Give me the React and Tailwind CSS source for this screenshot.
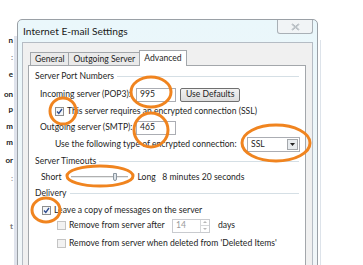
import React from "react";

function Check({ checked, disabled }) {
  return (
    <div
      className={
        "w-[9px] h-[9px] border flex items-center justify-center shrink-0 " +
        (disabled ? "border-[#c4c4c4] bg-[#f2f2f2]" : "border-[#8e8f8f] bg-[#f4f6f8]")
      }
    >
      {checked && (
        <svg width="7" height="7" viewBox="0 0 7 7">
          <path d="M1 3.5 L2.8 5.5 L6 1" stroke="#2b4a8e" strokeWidth="1.3" fill="none" />
        </svg>
      )}
    </div>
  );
}

function GroupLabel({ children }) {
  return (
    <div className="flex items-center h-[12px] gap-[3px]">
      <span className="text-[#1f1f1f] whitespace-nowrap">{children}</span>
      <div className="flex-1 h-px bg-[#d5dfe5] mt-[1px]" />
    </div>
  );
}

export default function App() {
  return (
    <div
      className="relative w-[363px] h-[265px] bg-white overflow-hidden text-[8.6px] leading-none text-[#1e1e1e] whitespace-nowrap"
      style={{ fontFamily: 'Lato, "Noto Sans", sans-serif' }}
    >
      {/* background window edge on the left */}
      <div className="absolute left-0 top-[36px] w-[17px] h-[229px] flex">
        <div className="flex flex-col w-[13px] font-bold text-[8px] leading-none text-[#222]">
          <span className="h-[8px] text-right">n</span>
          <span className="mt-[9px] text-right text-[#888]">:</span>
          <span className="mt-[9px] text-right">e</span>
          <span className="mt-[12px] text-right">on</span>
          <span className="mt-[7px] text-right">p</span>
          <span className="mt-[9px] text-right">m</span>
          <span className="mt-[8px] text-right">m</span>
          <span className="mt-[10px] text-right">or</span>
          <span className="mt-[10px] text-right text-[#999]">:</span>
          <span className="mt-[40px] text-right text-[#777]">t</span>
        </div>
        <div className="w-[3px] ml-[1px] h-full bg-[#dfe3ec]" />
      </div>

      {/* dialog window */}
      <div className="absolute left-[17px] top-[19px] w-[301px] h-[260px] rounded-t-[5px] border border-[#9aa0a6] bg-gradient-to-b from-[#eaf7fb] to-[#f1f6f8] flex flex-col px-[4px]">
        {/* title bar */}
        <div className="h-[22px] flex items-start shrink-0">
          <span className="text-[10.2px] text-[#1a1a1a] mt-[6px] ml-[1px]">Internet E-mail Settings</span>
          <div className="ml-auto w-[36px] h-[14px] border border-[#a9b0b6] border-t-0 rounded-b-[3px] bg-[#f1f4f6] flex items-center justify-center">
            <svg width="9" height="8" viewBox="0 0 9 8">
              <path d="M1 1 L8 7 M8 1 L1 7" stroke="#9aa3aa" strokeWidth="1.6" />
              <path d="M1 1 L8 7 M8 1 L1 7" stroke="#eef1f3" strokeWidth="0.5" />
            </svg>
          </div>
        </div>
        {/* client area */}
        <div className="flex-1 bg-[#f0f0f0] border border-[#b5bcc4] pt-[5px] pl-[5px] pr-[6px]">
          {/* tabs */}
          <div className="flex items-end h-[17px] pl-[2px]">
            <div className="h-[13px] px-[4px] border border-b-0 border-[#a3a7ab] bg-[#eaeaea] flex items-center">General</div>
            <div className="h-[13px] px-[4px] border border-b-0 border-l-0 border-[#a3a7ab] bg-[#eaeaea] flex items-center">Outgoing Server</div>
            <div className="h-[16px] px-[4px] border border-b-0 border-[#a3a7ab] bg-white flex items-center -ml-[1px] relative top-[1px]">Advanced</div>
          </div>
          {/* tab panel */}
          <div className="bg-white border border-[#a3a7ab] h-[220px] px-[6px] pt-[4px]">
            <GroupLabel>Server Port Numbers</GroupLabel>
            <div className="flex items-center h-[15px] mt-[5px] pl-[5px]">
              <span className="w-[96px]">Incoming server (POP3):</span>
              <div className="w-[40px] h-[14px] border border-[#abadb3] px-[3px] flex items-center">995</div>
              <div className="ml-[4px] h-[14px] px-[5px] border border-[#707070] rounded-[2px] bg-gradient-to-b from-[#f2f2f2] to-[#dddddd] flex items-center">Use Defaults</div>
            </div>
            <div className="flex items-center h-[12px] mt-[3px] pl-[20px] gap-[3px]">
              <Check checked />
              <span>This server requires an encrypted connection (SSL)</span>
            </div>
            <div className="flex items-center h-[15px] mt-[3px] pl-[5px]">
              <span className="w-[96px]">Outgoing server (SMTP):</span>
              <div className="w-[40px] h-[14px] border border-[#abadb3] px-[3px] flex items-center">465</div>
            </div>
            <div className="flex items-center h-[16px] mt-[1px] pl-[20px]">
              <span className="w-[192px] shrink-0">Use the following type of encrypted connection:</span>
              <div className="w-[53px] shrink-0 h-[15px] border border-[#abadb3] flex items-center pl-[3px]">
                <span className="flex-1">SSL</span>
                <div className="w-[11px] h-[11px] mr-[1px] border border-[#a4a8ac] bg-[#e8ecef] flex items-center justify-center">
                  <svg width="5" height="3" viewBox="0 0 5 3"><path d="M0 0 L5 0 L2.5 3 Z" fill="#222" /></svg>
                </div>
              </div>
            </div>
            <div className="mt-[3px]">
              <GroupLabel>Server Timeouts</GroupLabel>
            </div>
            <div className="flex items-center h-[12px] mt-[4px] pl-[6px]">
              <span>Short</span>
              <div className="relative ml-[10px] w-[57px] h-[10px] flex items-center">
                <div className="w-full h-[2px] bg-[#e7eaea] border-t border-[#b0b0b0]" />
                <div className="absolute left-[42px] top-[1px] w-[4px] h-[8px] bg-[#dfe5ea] border border-[#8b96a0] rounded-b-[2px]" />
              </div>
              <span className="ml-[9px]">Long&nbsp;&nbsp;&nbsp;8 minutes 20 seconds</span>
            </div>
            <div className="mt-[4px]">
              <GroupLabel>Delivery</GroupLabel>
            </div>
            <div className="flex items-center h-[12px] mt-[5px] pl-[7px] gap-[3px]">
              <Check checked />
              <span>Leave a copy of messages on the server</span>
            </div>
            <div className="flex items-center h-[15px] mt-[2px] pl-[22px] gap-[3px]">
              <Check disabled />
              <span className="w-[100px]">Remove from server after</span>
              <div className="w-[38px] h-[14px] border border-[#c9cbcf] flex items-center pl-[3px] text-[#9a9a9a]">
                <span className="flex-1">14</span>
                <div className="w-[9px] h-full flex flex-col border-l border-[#d6d8da]">
                  <div className="flex-1 flex items-center justify-center border-b border-[#d6d8da]">
                    <svg width="4" height="2" viewBox="0 0 4 2"><path d="M0 2 L4 2 L2 0 Z" fill="#b8b8b8" /></svg>
                  </div>
                  <div className="flex-1 flex items-center justify-center">
                    <svg width="4" height="2" viewBox="0 0 4 2"><path d="M0 0 L4 0 L2 2 Z" fill="#b8b8b8" /></svg>
                  </div>
                </div>
              </div>
              <span className="ml-[5px]">days</span>
            </div>
            <div className="flex items-center h-[12px] mt-[4px] pl-[22px] gap-[3px]">
              <Check disabled />
              <span>Remove from server when deleted from 'Deleted Items'</span>
            </div>
          </div>
        </div>
      </div>

      {/* right-side lines */}
      <div className="absolute left-[320px] top-[40px] w-px h-[225px] bg-[#dde3ea]" />

      {/* orange annotations */}
      <svg className="absolute left-0 top-0" width="363" height="265" viewBox="0 0 363 265">
        <g fill="none" stroke="#f0841f" strokeWidth="3">
          <ellipse cx="151" cy="92" rx="20" ry="15" />
          <ellipse cx="63" cy="111" rx="13" ry="13" />
          <ellipse cx="151" cy="130" rx="17" ry="17" />
          <ellipse cx="276" cy="143" rx="34" ry="18" />
          <ellipse cx="100" cy="176" rx="33" ry="10" />
          <ellipse cx="46" cy="210" rx="14" ry="12" />
        </g>
      </svg>
    </div>
  );
}
